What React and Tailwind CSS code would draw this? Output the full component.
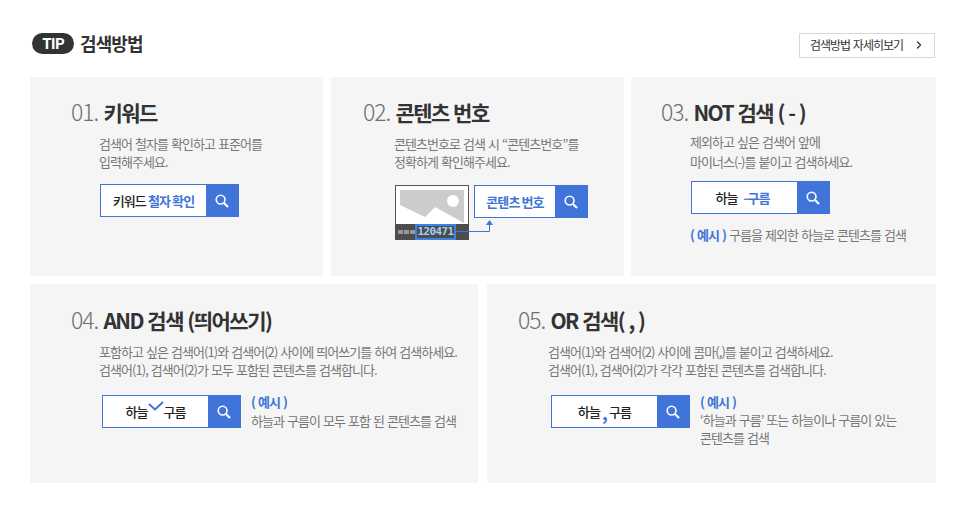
import { ChevronRight } from 'lucide-react';

const font = { fontFamily: '"Noto Sans CJK KR", "Noto Sans", sans-serif' };

function Title({ no, children }) {
	return (
		<h3 className="flex items-baseline h-[32px] leading-[32px]">
			<span className="text-[23px] font-light tracking-[-1px] text-[#6f6f6f] mr-[5px]">{no}</span>
			<span className="text-[21px] font-bold tracking-[-1.5px] [word-spacing:1px] text-[#333]">{children}</span>
		</h3>
	);
}

function Desc({ className, children }) {
	return <p className={`text-[13px] leading-[18px] tracking-[-0.95px] [word-spacing:1px] text-[#777] whitespace-nowrap ${className}`}>{children}</p>;
}

function SearchBox({ className, w = 'w-[139px]', children }) {
	return (
		<div className={`flex h-[33px] bg-white border border-[#3f74d9] shrink-0 ${w} ${className}`}>
			<div className="flex-1 flex items-center justify-center text-[13px] font-medium tracking-[-0.9px] text-[#222] whitespace-pre">{children}</div>
			<div className="w-[32px] bg-[#4174d9] flex items-center justify-center">
				<svg width="14" height="14" viewBox="0 0 14 14">
					<circle cx="5.6" cy="5.6" r="4.4" fill="none" stroke="#fff" strokeWidth="1.6" />
					<path d="M9 9 L13 13" stroke="#fff" strokeWidth="2.2" />
				</svg>
			</div>
		</div>
	);
}

function Thumb() {
	return (
		<div className="relative w-[74px] h-[55px] bg-white border border-[#555] border-b-0 shrink-0">
			<svg width="64" height="34" viewBox="0 0 64 34" className="absolute left-[4px] top-[4px]">
				<rect width="64" height="34" fill="#ccc" />
				<path d="M0 15 L25 27 L35 17 L64 33 V34 H0 Z" fill="#fff" />
				<circle cx="53" cy="11" r="6" fill="#fff" />
			</svg>
			<div className="absolute left-[-1px] right-[-1px] bottom-0 h-[16px] bg-[#4d4d4d] flex items-center">
				<div className="flex gap-[1px] ml-[3px]">
					<span className="w-[5px] h-[4px] bg-[#999]" />
					<span className="w-[5px] h-[4px] bg-[#999]" />
					<span className="w-[5px] h-[4px] bg-[#999]" />
				</div>
				<div className="w-[41px] h-[16px] border-2 border-[#3f7fe8] flex items-center justify-center text-[11px] font-bold text-[#9fd0f5] font-['DejaVu_Sans_Mono'] tracking-[-0.6px]">120471</div>
			</div>
		</div>
	);
}

export default function App() {
	return (
		<div className="w-[966px] h-[512px] bg-white px-[30px] pt-[32px]" style={font}>
			<div className="flex items-center justify-between h-[26px] ml-[2px] mr-[1px]">
				<div className="flex items-center mb-[4px]">
					<span className="w-[42px] h-[21px] rounded-full bg-[#333] text-white text-[15px] font-bold tracking-[-1px] flex items-center justify-center">TIP</span>
					<span className="ml-[6px] text-[18px] font-bold text-[#333] tracking-[-0.9px]">검색방법</span>
				</div>
				<div className="w-[136px] h-[25px] border border-[#d8d8d8] flex items-center justify-between pl-[10px] pr-[9px] text-[12px] text-[#333] tracking-[-1px] [word-spacing:1px]">
					검색방법 자세히보기
					<ChevronRight size={12} strokeWidth={2.6} className="text-[#333]" />
				</div>
			</div>

			<div className="flex mt-[19px] h-[199px]">
				<div className="w-[293px] bg-[#f5f5f5] pl-[41px] pt-[18px]">
					<Title no="01.">키워드</Title>
					<Desc className="ml-[28px] mt-[8px]">검색어 철자를 확인하고 표준어를<br />입력해주세요.</Desc>
					<SearchBox className="ml-[29px] mt-[13px]">키워드 <span className="text-[#3f74d9] font-bold">철자 확인</span></SearchBox>
				</div>
				<div className="w-[293px] ml-[8px] bg-[#f5f5f5] pl-[32px] pt-[18px]">
					<Title no="02.">콘텐츠 번호</Title>
					<Desc className="ml-[31px] mt-[8px]">콘텐츠번호로 검색 시 “콘텐츠번호”를<br />정확하게 확인해주세요.</Desc>
					<div className="relative flex ml-[32px] mt-[14px]">
						<Thumb />
						<SearchBox className="ml-[5px]" w="w-[114px]"><span className="text-[#3f74d9] font-bold">콘텐츠 번호</span></SearchBox>
						<svg width="38" height="14" viewBox="0 0 38 14" className="absolute left-[61px] top-[35px]">
							<path d="M0 11.5 H33.5 V4" fill="none" stroke="#3f74d9" strokeWidth="1" />
							<path d="M33.5 0 L37 5 H30 Z" fill="#3f74d9" />
						</svg>
					</div>
				</div>
				<div className="w-[305px] ml-[7px] bg-[#f5f5f5] pl-[30px] pt-[18px]">
					<Title no="03.">NOT 검색 ( - )</Title>
					<Desc className="ml-[29px] mt-[5px] leading-[20px]">제외하고 싶은 검색어 앞에<br />마이너스(-)를 붙이고 검색하세요.</Desc>
					<SearchBox className="ml-[30px] mt-[9px]">하늘   <span className="text-[#3f74d9] font-bold mr-[4px]">-구름</span></SearchBox>
					<Desc className="ml-[29px] mt-[12px]"><span className="text-[#3f74d9] font-bold">( 예시 )</span> 구름을 제외한 하늘로 콘텐츠를 검색</Desc>
				</div>
			</div>

			<div className="flex mt-[8px] h-[199px]">
				<div className="w-[448px] bg-[#f5f5f5] pl-[41px] pt-[19px]">
					<Title no="04.">AND 검색 (띄어쓰기)</Title>
					<Desc className="ml-[28px] mt-[8px]">포함하고 싶은 검색어(1)와 검색어(2) 사이에  띄어쓰기를 하여 검색하세요.<br />검색어(1), 검색어(2)가 모두 포함된 콘텐츠를 검색합니다.</Desc>
					<div className="flex ml-[31px] mt-[16px]">
						<SearchBox>
							<span className="relative">하늘<svg width="16" height="10" viewBox="0 0 16 10" className="inline-block align-top mt-[-1px]"><path d="M1 3 L7 8.5 L15 1" fill="none" stroke="#3f74d9" strokeWidth="2" /></svg>구름</span>
						</SearchBox>
						<Desc className="ml-[10px] mt-[-2px]"><span className="text-[#3f74d9] font-bold">( 예시 )</span><br /><span className="relative top-[1px]">하늘과 구름이 모두 포함 된 콘텐츠를 검색</span></Desc>
					</div>
				</div>
				<div className="w-[449px] ml-[9px] bg-[#f5f5f5] pl-[31px] pt-[19px]">
					<Title no="05.">OR 검색( , )</Title>
					<Desc className="ml-[30px] mt-[8px]">검색어(1)와 검색어(2) 사이에 콤마(,)를 붙이고 검색하세요.<br />검색어(1), 검색어(2)가 각각 포함된 콘텐츠를 검색합니다.</Desc>
					<div className="flex ml-[33px] mt-[16px]">
						<SearchBox>하늘 <span className="text-[#3f74d9] font-bold text-[18px] leading-none">,</span> 구름</SearchBox>
						<Desc className="ml-[10px] mt-[-2px]"><span className="text-[#3f74d9] font-bold">( 예시 )</span><br />‘하늘과 구름’ 또는 하늘이나 구름이 있는<br />콘텐츠를 검색</Desc>
					</div>
				</div>
			</div>
		</div>
	);
}
